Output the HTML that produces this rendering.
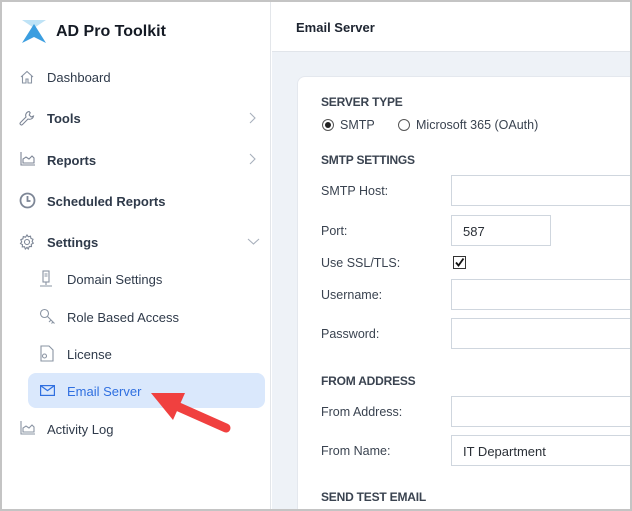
<!DOCTYPE html>
<html style="width:632px;height:511px;overflow:hidden"><head><meta charset="utf-8"><style>
*{margin:0;padding:0;box-sizing:border-box}
body{width:632px;height:511px;overflow:hidden;font-family:"Liberation Sans",sans-serif;background:#fff;position:relative}
.frame{position:absolute;left:0;top:0;width:632px;height:511px;border:2px solid #c4c4c4;z-index:10;pointer-events:none}
.side{position:absolute;left:0;top:0;width:271px;height:511px;background:#fff;border-right:1px solid #e3e6ea}
.t{position:absolute;color:#2f3a4a;font-size:13px;white-space:nowrap}
.main{position:absolute;left:272px;top:0;width:360px;height:511px;background:#eef2f7}
.hdr{position:absolute;left:272px;top:0;width:360px;height:52px;background:#fff;border-bottom:1px solid #e1e5ea}
.card{position:absolute;left:297px;top:76px;width:335px;height:435px;background:#fff;border-radius:8px 0 0 0;border:1px solid #e4e8ee;border-right:none;border-bottom:none}
.lbl{position:absolute;color:#3a4350;font-size:12.5px;white-space:nowrap}
.sec{position:absolute;color:#3a4350;font-size:12px;font-weight:bold;white-space:nowrap;letter-spacing:-0.2px}
.in{position:absolute;left:451px;width:181px;height:31px;border:1px solid #cfd6de;border-right:none;background:#fff;font-size:13px;color:#2a2f36;padding:8px 0 0 11px}
svg.ic{position:absolute}
</style></head><body>
<div class="side"></div>
<svg class="ic" style="left:22px;top:20px" width="25" height="24" viewBox="0 0 25 24"><polygon points="0,0 24,0 12,8" fill="#bfe3f6"/><polygon points="12,4 24,23 12,17 0,23" fill="#3b9ee0"/></svg>
<div class="t" style="left:56px;top:23px;font-size:16px;font-weight:bold;color:#141a24">AD Pro Toolkit</div>

<svg class="ic" style="left:20px;top:70px" width="14" height="14" viewBox="0 0 14 14" fill="none" stroke="#8a94a3" stroke-width="1.1"><path d="M1 7L7 1.5 13 7M2.5 5.5V13h3.5V9h2v4h3.5V5.5"/></svg>
<div class="t" style="left:47px;top:70px">Dashboard</div>
<svg class="ic" style="left:19px;top:110px" width="16" height="16" viewBox="0 0 16 16" fill="none" stroke="#7d8696" stroke-width="1.1"><path d="M10 1.5a4 4 0 0 0-3 5.5L1.5 12.5a1.4 1.4 0 0 0 2 2L9 9a4 4 0 0 0 5.5-3l-2.3 1-2-2 1-2.3z"/></svg>
<div class="t" style="left:47px;top:111px;font-weight:bold">Tools</div>
<svg class="ic" style="left:249px;top:112px" width="8" height="12"><path d="M1 1l5 5-5 5" fill="none" stroke="#a8b0bc" stroke-width="1.1"/></svg>
<svg class="ic" style="left:20px;top:152px" width="15" height="14" viewBox="0 0 15 14" fill="none" stroke="#7d8696" stroke-width="1.1"><path d="M1 0v13h14M3 11V7l3-2 3 2 3-3 2 2v5z"/></svg>
<div class="t" style="left:47px;top:153px;font-weight:bold">Reports</div>
<svg class="ic" style="left:249px;top:153px" width="8" height="12"><path d="M1 1l5 5-5 5" fill="none" stroke="#a8b0bc" stroke-width="1.1"/></svg>
<svg class="ic" style="left:19px;top:192px" width="17" height="17" viewBox="0 0 17 17" fill="none" stroke="#7d8696" stroke-width="1.8"><circle cx="8.5" cy="8.5" r="7"/><path d="M8.5 4v5h3"/></svg>
<div class="t" style="left:47px;top:194px;font-weight:bold">Scheduled Reports</div>
<svg class="ic" style="left:19px;top:234px" width="16" height="16" viewBox="0 0 16 16" fill="none" stroke="#7d8696" stroke-width="1.1"><circle cx="8" cy="8" r="2.5"/><path d="M8 1l1.3 1.8 2.2-.6.4 2.2 2.1.9-.9 2.1 1.2 1.8-2 1.1.2 2.2-2.2-.1L9.2 15 8 13.3 6.3 15 5.5 12.7l-2.2.2.2-2.2-2-1.1 1.2-1.8L1.8 5.7l2.1-.9.4-2.2 2.2.6z"/></svg>
<div class="t" style="left:47px;top:235px;font-weight:bold">Settings</div>
<svg class="ic" style="left:247px;top:238px" width="13" height="8"><path d="M1 1l5.5 5L12 1" fill="none" stroke="#a8b0bc" stroke-width="1.1"/></svg>

<svg class="ic" style="left:39px;top:270px" width="14" height="18" viewBox="0 0 14 18" fill="none" stroke="#8a94a3" stroke-width="1.1"><rect x="4" y="1" width="6" height="11"/><path d="M5.5 4h3M5.5 6h3M7 12v3M1 16h12"/></svg>
<div class="t" style="left:67px;top:272px">Domain Settings</div>
<svg class="ic" style="left:39px;top:308px" width="17" height="17" viewBox="0 0 17 17" fill="none" stroke="#8a94a3" stroke-width="1.1"><circle cx="5.5" cy="5.5" r="4"/><path d="M8.5 8.5l7 7M12 12l-2 2M14 14l-1.5 1.5"/></svg>
<div class="t" style="left:67px;top:310px">Role Based Access</div>
<svg class="ic" style="left:40px;top:345px" width="14" height="17" viewBox="0 0 14 17" fill="none" stroke="#8a94a3" stroke-width="1.1"><path d="M1 1h8l4 4v11H1z"/><circle cx="4.5" cy="11" r="2"/></svg>
<div class="t" style="left:67px;top:347px">License</div>
<div style="position:absolute;left:28px;top:373px;width:237px;height:35px;background:#dae8fc;border-radius:8px"></div>
<svg class="ic" style="left:40px;top:385px" width="15" height="11" viewBox="0 0 15 11" fill="none" stroke="#2f6fe0" stroke-width="1.2"><rect x=".6" y=".6" width="13.8" height="9.8"/><path d="M.6 .6l6.9 5 6.9-5"/></svg>
<div class="t" style="left:67px;top:384px;color:#2f6fe0">Email Server</div>
<svg class="ic" style="left:20px;top:421px" width="15" height="14" viewBox="0 0 15 14" fill="none" stroke="#8a94a3" stroke-width="1.1"><path d="M1 0v13h14M3 11V7l3-2 3 2 3-3 2 2v5z"/></svg>
<div class="t" style="left:47px;top:422px">Activity Log</div>

<div class="main"></div>
<div class="hdr"></div>
<div class="t" style="left:296px;top:20px;font-weight:bold;color:#1d2430">Email Server</div>
<div class="card"></div>
<div class="sec" style="left:321px;top:95px">SERVER TYPE</div>
<div style="position:absolute;left:322px;top:119px;width:12px;height:12px;border:1px solid #555;border-radius:50%"><div style="width:6px;height:6px;margin:2px;background:#222;border-radius:50%"></div></div>
<div class="lbl" style="left:340px;top:118px">SMTP</div>
<div style="position:absolute;left:398px;top:119px;width:12px;height:12px;border:1px solid #555;border-radius:50%"></div>
<div class="lbl" style="left:416px;top:118px">Microsoft 365 (OAuth)</div>
<div class="sec" style="left:321px;top:153px">SMTP SETTINGS</div>
<div class="lbl" style="left:321px;top:184px">SMTP Host:</div>
<div class="in" style="top:175px"></div>
<div class="lbl" style="left:321px;top:224px">Port:</div>
<div class="in" style="top:215px;width:100px;border-right:1px solid #cfd6de">587</div>
<div class="lbl" style="left:321px;top:256px">Use SSL/TLS:</div>
<div style="position:absolute;left:453px;top:256px;width:13px;height:13px;border:1px solid #333;background:#fff"><svg width="11" height="11" style="position:absolute;left:0;top:0"><path d="M2 5.5l2.5 3L9.5 1.5" fill="none" stroke="#111" stroke-width="1.8"/></svg></div>
<div class="lbl" style="left:321px;top:288px">Username:</div>
<div class="in" style="top:279px"></div>
<div class="lbl" style="left:321px;top:327px">Password:</div>
<div class="in" style="top:318px"></div>
<div class="sec" style="left:321px;top:374px">FROM ADDRESS</div>
<div class="lbl" style="left:321px;top:405px">From Address:</div>
<div class="in" style="top:396px"></div>
<div class="lbl" style="left:321px;top:444px">From Name:</div>
<div class="in" style="top:435px">IT Department</div>
<div class="sec" style="left:321px;top:490px">SEND TEST EMAIL</div>

<svg class="ic" style="left:145px;top:385px" width="95" height="55" viewBox="145 385 95 55"><polygon points="151,393 185,393 173,420" fill="#f0403f"/><path d="M172,404 L226,428" stroke="#f0403f" stroke-width="9" stroke-linecap="round"/></svg>
<div class="frame"></div>
</body></html>
